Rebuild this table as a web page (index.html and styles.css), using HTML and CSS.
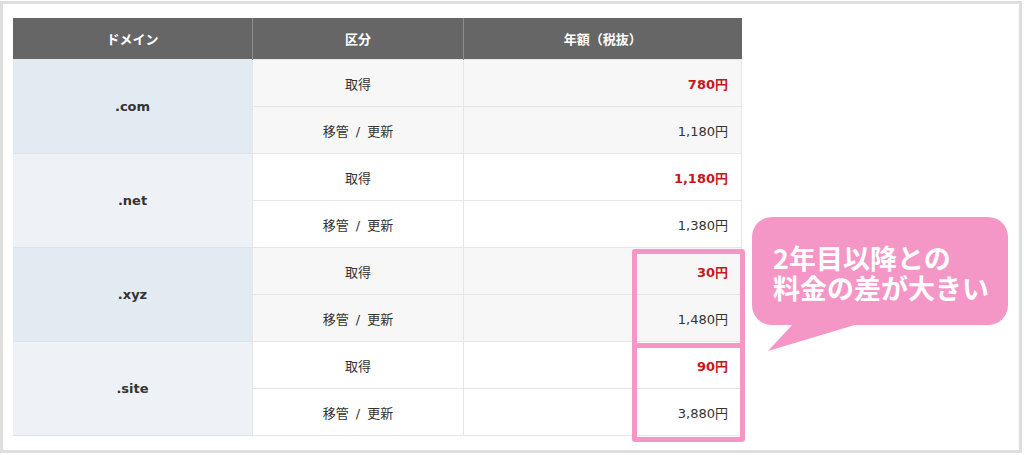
FILE: index.html
```html
<!DOCTYPE html>
<html lang="ja">
<head>
    <meta charset="UTF-8">
    <meta name="viewport" content="width=device-width, initial-scale=1.0">
    <title>ドメイン料金</title>
    <link rel="stylesheet" href="styles.css">
</head>
<body>
    <div class="frame">
        <table class="price-table">
            <thead>
                <tr>
                    <th class="col-domain">ドメイン</th>
                    <th class="col-type">区分</th>
                    <th class="col-price">年額（税抜）</th>
                </tr>
            </thead>
            <tbody>
                <tr class="odd">
                    <td class="domain" rowspan="2">.com</td>
                    <td class="type">取得</td>
                    <td class="price sale">780円</td>
                </tr>
                <tr class="odd">
                    <td class="type">移管 / 更新</td>
                    <td class="price">1,180円</td>
                </tr>
                <tr class="even">
                    <td class="domain" rowspan="2">.net</td>
                    <td class="type">取得</td>
                    <td class="price sale">1,180円</td>
                </tr>
                <tr class="even">
                    <td class="type">移管 / 更新</td>
                    <td class="price">1,380円</td>
                </tr>
                <tr class="odd">
                    <td class="domain" rowspan="2">.xyz</td>
                    <td class="type">取得</td>
                    <td class="price sale">30円</td>
                </tr>
                <tr class="odd">
                    <td class="type">移管 / 更新</td>
                    <td class="price">1,480円</td>
                </tr>
                <tr class="even">
                    <td class="domain" rowspan="2">.site</td>
                    <td class="type">取得</td>
                    <td class="price sale">90円</td>
                </tr>
                <tr class="even">
                    <td class="type">移管 / 更新</td>
                    <td class="price">3,880円</td>
                </tr>
            </tbody>
        </table>

        <!-- highlight marks over the price column -->
        <div class="mark mark-xyz"></div>
        <div class="mark mark-site"></div>

        <div class="bubble">
            <span class="bubble-line">2年目以降との</span>
            <span class="bubble-line">料金の差が大きい</span>
            <svg class="bubble-tail" width="92" height="30" viewBox="0 0 92 30">
                <polygon points="25,0 90,0 0,27" fill="#f597c6"/>
            </svg>
        </div>
    </div>
</body>
</html>
```

FILE: styles.css
```css
body {
    margin: 0;
    font-family: "DejaVu Sans", "Noto Sans CJK JP", sans-serif;
    color: #333;
    background: #fff;
}

.frame {
    position: relative;
    box-sizing: border-box;
    width: 1022px;
    height: 452px;
    margin-top: 1px;
    border: 3px solid #dedede;
    padding: 14px 10px;
}

.price-table {
    border-collapse: collapse;
    width: 729px;
    font-size: 13px;
}

.price-table th {
    height: 41px;
    padding: 0;
    background: #666;
    color: #fff;
    font-weight: bold;
    text-align: center;
    border-right: 1px solid #8c8c8c;
}

.price-table th:last-child {
    border-right: none;
}

.col-domain { width: 239px; }
.col-type { width: 210px; }

.price-table td {
    height: 46px;
    padding: 0;
    border: 1px solid #e6e6e6;
    vertical-align: middle;
}

.price-table tr td:first-child {
    border-left: none;
}

.odd td { background: #f7f7f7; }
.even td { background: #fff; }

.odd .domain { background: #e2eaf2; }
.even .domain { background: #eef2f6; }

.domain {
    text-align: center;
    font-weight: bold;
    font-size: 13px;
    border-bottom-color: #dbe2e9 !important;
}

.type {
    text-align: center;
    word-spacing: 3px;
}

.price {
    text-align: right;
    padding-right: 13px !important;
}

.sale {
    color: #c8161d;
    font-weight: bold;
}

.mark {
    position: absolute;
    left: 629px;
    width: 113px;
    box-sizing: border-box;
    border: 5px solid #f597c6;
    border-radius: 3px;
}

.mark-xyz {
    top: 245px;
    height: 99px;
}

.mark-site {
    top: 339px;
    height: 99px;
}

.bubble {
    position: absolute;
    left: 749px;
    top: 213px;
    width: 256px;
    height: 108px;
    box-sizing: border-box;
    padding: 26px 0 0 21px;
    background: #f597c6;
    border-radius: 20px;
}

.bubble-line {
    display: block;
    height: 30px;
    color: #fff;
    font-family: "Noto Sans CJK JP", sans-serif;
    font-weight: bold;
    font-size: 27px;
    line-height: 30px;
}

.bubble-tail {
    position: absolute;
    left: 16px;
    top: 107px;
}
```
